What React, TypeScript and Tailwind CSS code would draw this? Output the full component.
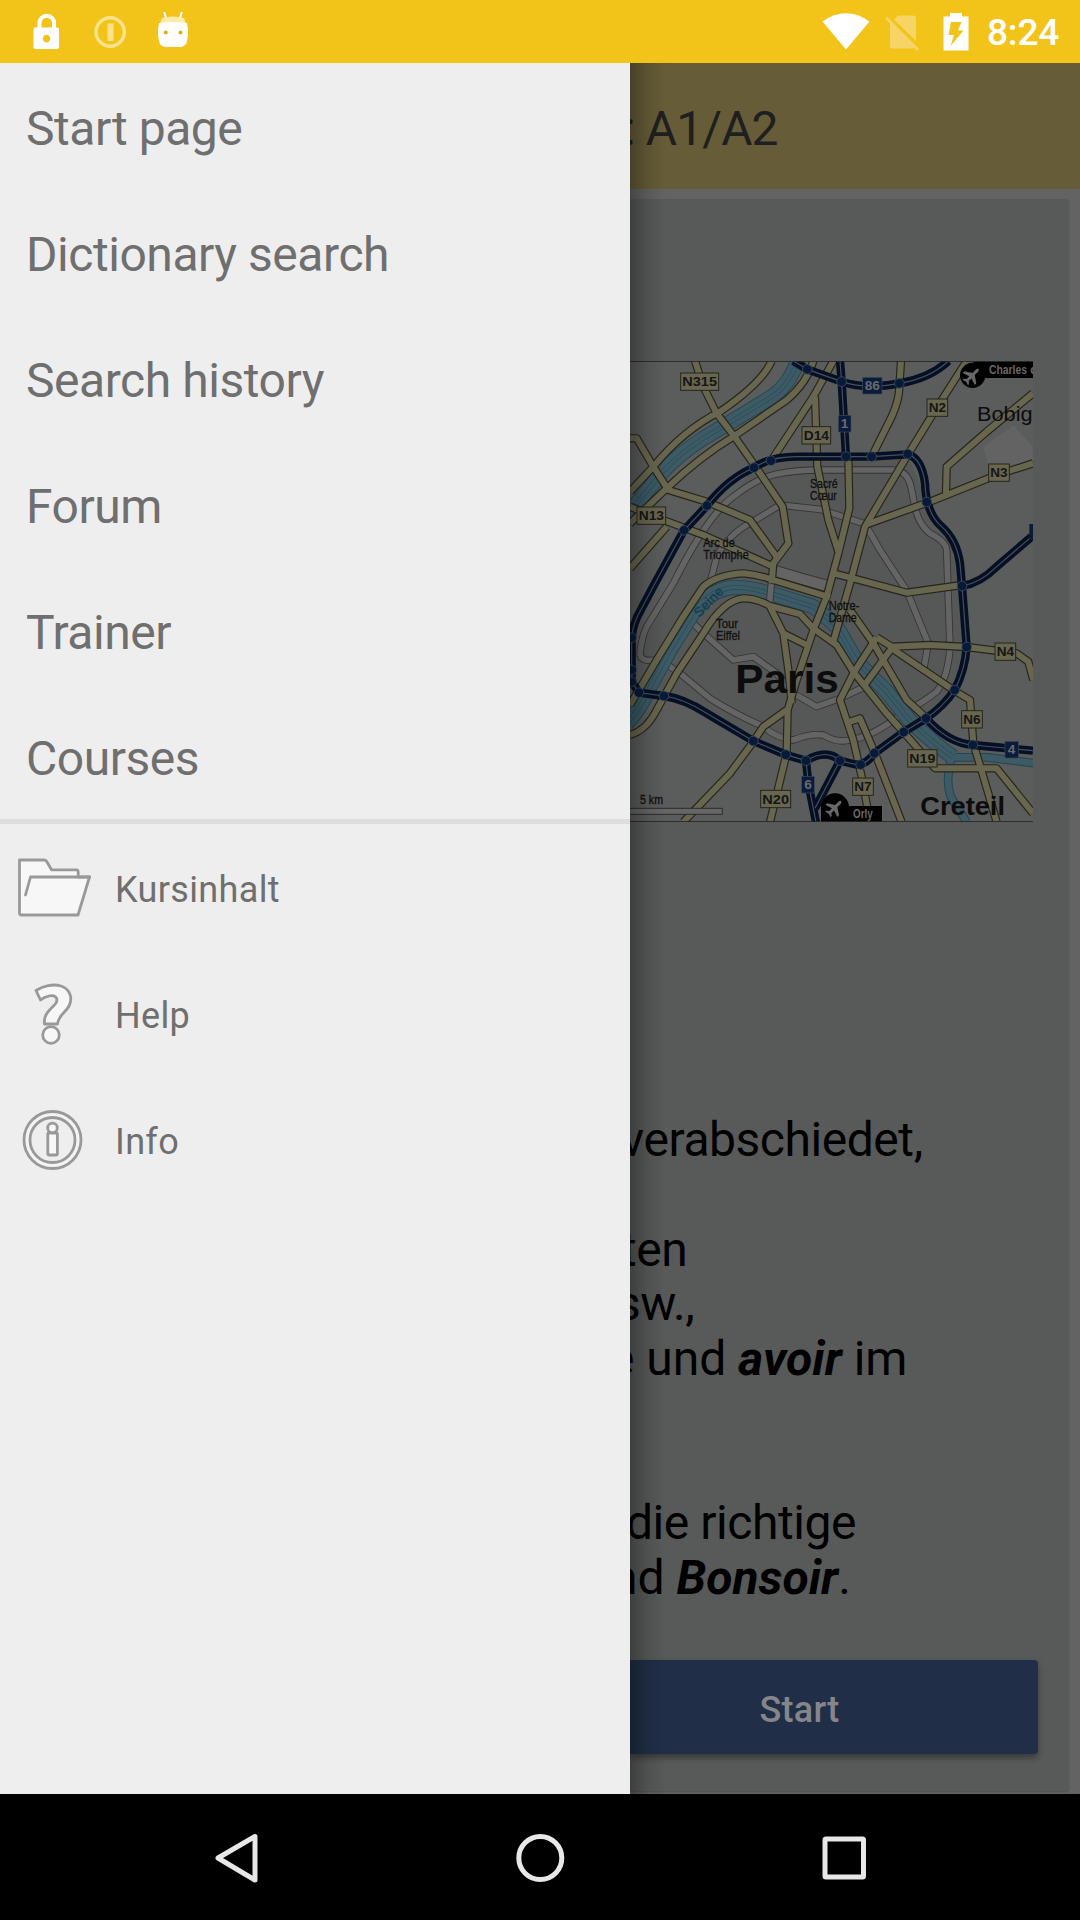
import React from "react";

const menuItems = ["Start page", "Dictionary search", "Search history", "Forum", "Trainer", "Courses"];

const whiteRoads = [
  "M160 700 C200 620 270 490 340 440 Q410 385 470 372 Q530 360 600 360 H820 Q858 362 870 400 C885 450 880 510 930 550 Q978 575 980 600 L984 720 L990 890 Q985 980 950 1025 Q905 1060 850 1088 Q760 1160 690 1170 Q650 1180 610 1155 Q570 1150 520 1170 Q470 1165 430 1130 Q340 1090 270 1045 L180 970 L118 928 Q60 940 60 910 Q65 860 80 830 L160 700",
  "M270 700 L290 620 Q330 550 390 520 L480 465 L600 478 L735 522 L780 600 L860 722 L925 880 L912 952",
  "M200 800 L245 845 L340 930 L400 920 L470 970 L520 1030 L590 1070 L660 1045 L735 1010",
];

const wideWhiteRoads = ["M455 660 L540 685 L630 710"];

const bridges = ["M455 690 L448 765"];

const yellowRoads = [
  "M225 33 L250 110 L290 190 L340 255 L410 355 L488 470 L505 580 L460 640 L455 700",
  "M455 33 Q425 100 300 185 Q190 240 100 350 L30 425",
  "M580 33 Q560 100 500 150 L340 260 Q240 320 140 415 L30 520",
  "M30 265 H50 L100 350 L145 420 L260 455 L390 510 L470 620",
  "M30 470 L130 510 L250 555 L460 650",
  "M140 530 L30 655",
  "M640 33 L580 140 L455 330",
  "M585 140 L592 350 L625 510 L655 605",
  "M685 320 L688 475 L655 610 L620 740 L580 840 L530 990 L503 1080 L500 1210 L450 1416",
  "M1040 33 L940 190 L860 320 L735 530 L690 700 L640 875",
  "M843 33 L838 110 Q838 160 800 230 L755 320",
  "M1239 340 L1130 375 L930 455 L735 525",
  "M1239 130 L1100 245 L980 350 L978 430",
  "M640 670 L700 685 L860 728 L1026 705",
  "M30 1065 L110 930 L190 800 L250 710 Q290 675 370 670 Q420 675 460 690 L630 742",
  "M30 1155 Q80 1140 110 1080 L170 970 L250 850 Q310 750 370 745 Q410 745 450 768 L540 792 L580 835 L650 885 L700 965 L800 1090 L880 1180 L945 1255 H1130 L1239 1390",
  "M690 780 L760 880 L860 1050 L920 1105",
  "M770 862 L815 890 L930 885 L1040 891 L1190 910 L1225 935 L1240 990",
  "M815 895 L1000 1020 L1050 1050 L1060 1180 L1090 1280 L1130 1416",
  "M815 895 L730 1010",
  "M770 862 L700 970 L660 1050 L700 1170 L725 1280 L750 1416",
  "M690 1115 L720 1105 L765 1210 L845 1416",
  "M450 770 L490 850 L505 960 L515 1060",
  "M490 850 L570 890",
  "M500 1080 L430 1130 L400 1175 L330 1270 L190 1416",
];

const rivers = [
  "M535 25 Q510 110 440 150 L350 205 L250 265 Q150 330 100 400 L50 460 L20 520",
  "M20 1120 Q60 1080 90 1010 L150 900 L225 780 Q270 720 340 712 Q400 712 500 745 L580 770 Q620 800 650 830 Q680 880 710 935 L800 1025 L870 1112 Q940 1180 1000 1222",
];

const streams = [
  "M1000 1222 H1100 L1245 1240",
  "M995 1222 Q975 1290 992 1340 L1040 1416",
];

const highways = [
  "M105 700 L192 541 L261 467 Q325 385 402 353 Q450 320 530 320 H755 L863 313 Q905 325 915 400 Q918 490 965 530 Q1010 570 1020 640 L1026 708 L1040 891 Q1035 960 1004 1020 Q970 1070 918 1105 L851 1146 L763 1210 Q735 1250 700 1242 L660 1232 Q620 1195 558 1232 L497 1214 L400 1173 L260 1090 Q190 1045 132 1038 L57 1028 L35 995 V863 Q38 820 65 775 Z",
  "M520 33 L562 58 L665 95 Q740 120 838 100 Q930 85 985 33",
  "M660 33 L665 95 L678 320",
  "M918 1105 Q985 1180 1059 1185 L1239 1202",
  "M1026 708 Q1080 700 1130 650 L1235 560",
  "M558 1232 L565 1300 L588 1416",
  "M660 1232 L585 1375",
];

const nodes = [
  [562, 58], [665, 95], [678, 320], [453, 332], [402, 353], [261, 467], [192, 541], [35, 863], [35, 960], [35, 995],
  [57, 1028], [132, 1038], [400, 1173], [497, 1214], [558, 1232], [660, 1232], [722, 1244], [763, 1210], [851, 1146],
  [918, 1105], [1004, 1020], [1040, 891], [1026, 708], [920, 456], [863, 312], [755, 320], [838, 100], [1059, 1185],
];

const roadSigns: [string, number, number, number][] = [
  ["N315", 239, 95, 114], ["D14", 589, 256, 86], ["N13", 94, 497, 86], ["N2", 952, 173, 62], ["N3", 1137, 368, 62],
  ["N4", 1156, 905, 62], ["N6", 1056, 1108, 62], ["N19", 907, 1225, 88], ["N7", 729, 1310, 62], ["N20", 467, 1347, 90],
];

const highwaySigns: [string, number, number, number][] = [
  ["86", 757, 107, 58], ["1", 674, 221, 38], ["6", 564, 1304, 38], ["4", 1175, 1199, 40],
];

function Strokes({ paths, color, width }: { paths: string[]; color: string; width: number }) {
  return (
    <g fill="none" stroke={color} strokeWidth={width} strokeLinejoin="round">
      {paths.map((d) => <path key={d} d={d} />)}
    </g>
  );
}

function Plane({ x, y }: { x: number; y: number }) {
  return (
    <g transform={`translate(${x} ${y}) rotate(45) scale(2.3)`}>
      <path
        d="M0 -12 C1.5 -12 2 -10 2 -8 V-3 L11 3 V6 L2 3 V8 L5 10.500 V12.500 L0 11 L-5 12.500 V10.500 L-2 8 V3 L-11 6 V3 L-2 -3 V-8 C-2 -10 -1.500 -12 0 -12Z"
        fill="#686868"
      />
    </g>
  );
}

function ParisMap() {
  return (
    <svg className="block h-[461px] w-[403px]" viewBox="30 33 1209 1383" fontFamily="Liberation Sans, Arial, sans-serif">
      <rect x="30" y="33" width="1209" height="1383" fill="#5b5c5c" />
      <path d="M60 910 L90 790 L240 570 L402 353 L530 320 H863 L915 440 L1020 640 L1040 891 L1004 1020 L851 1146 L660 1232 L500 1214 L132 1038Z" fill="#565757" />
      <path d="M1090 290 L1180 225 L1239 290 V335 L1112 370Z" fill="#636363" />
      <Strokes paths={whiteRoads} color="#333333" width={22} />
      <Strokes paths={wideWhiteRoads} color="#333333" width={36} />
      <Strokes paths={whiteRoads} color="#646464" width={17} />
      <Strokes paths={wideWhiteRoads} color="#646464" width={31} />
      <Strokes paths={streams} color="#1f4654" width={26} />
      <Strokes paths={rivers} color="#1f4654" width={46} />
      <Strokes paths={streams} color="#3e5a64" width={20} />
      <Strokes paths={rivers} color="#3e5a64" width={41} />
      <Strokes paths={rivers} color="#28505f" width={14} />
      <Strokes paths={rivers} color="#3e5a64" width={9} />
      <Strokes paths={bridges} color="#333333" width={22} />
      <Strokes paths={bridges} color="#646464" width={17} />
      <Strokes paths={yellowRoads} color="#27251b" width={25} />
      <Strokes paths={yellowRoads} color="#68664f" width={18} />
      <Strokes paths={highways} color="#061025" width={25} />
      <Strokes paths={highways} color="#46505f" width={3.5} />
      <path d="M1228 522 H1239 V570 H1228Z" fill="#0b1c3a" />
      {nodes.map(([x, y]) => (
        <circle key={`${x}-${y}`} cx={x} cy={y} r="14.500" fill="#081a38" stroke="#3c4e62" strokeWidth="2.500" />
      ))}
      {roadSigns.map(([t, x, y, w]) => (
        <g key={t}>
          <rect x={x - w / 2} y={y - 26} width={w} height="52" fill="#68664f" stroke="#27251b" strokeWidth="3" />
          <text x={x - w / 2 + 5} y={y + 14} fontSize="40" fontWeight="700" textLength={w - 10} lengthAdjust="spacingAndGlyphs" fill="#151515">{t}</text>
        </g>
      ))}
      {highwaySigns.map(([t, x, y, w]) => (
        <g key={t}>
          <rect x={x - w / 2} y={y - 25} width={w} height="50" fill="#0b1c3a" stroke="#39485b" strokeWidth="2" />
          <text x={x} y={y + 14} fontSize="41" fontWeight="700" textAnchor="middle" fill="#686b70">{t}</text>
        </g>
      ))}
      <g fill="#111111" stroke="#111111" strokeWidth="1" fontSize="36">
        <text x="570" y="414" textLength="83" lengthAdjust="spacingAndGlyphs">Sacré</text>
        <text x="570" y="449" textLength="80" lengthAdjust="spacingAndGlyphs">Cœur</text>
        <text x="250" y="591" textLength="94" lengthAdjust="spacingAndGlyphs">Arc de</text>
        <text x="250" y="627" textLength="136" lengthAdjust="spacingAndGlyphs">Triomphe</text>
        <text x="288" y="834" textLength="66" lengthAdjust="spacingAndGlyphs">Tour</text>
        <text x="288" y="870" textLength="72" lengthAdjust="spacingAndGlyphs">Eiffel</text>
        <text x="626" y="780" textLength="92" lengthAdjust="spacingAndGlyphs">Notre-</text>
        <text x="626" y="815" textLength="84" lengthAdjust="spacingAndGlyphs">Dame</text>
        <text x="60" y="1362" textLength="69" lengthAdjust="spacingAndGlyphs">5 km</text>
      </g>
      <text transform="translate(238 804) rotate(-46)" fontSize="40" fill="#123c50" textLength="108" stroke="#123c50" strokeWidth=".7">Seine</text>
      <text x="346" y="1030" fontSize="124" fontWeight="700" fill="#0c0c0c" textLength="310" lengthAdjust="spacingAndGlyphs">Paris</text>
      <text x="901" y="1395" fontSize="76" fontWeight="700" fill="#0c0c0c" textLength="254" lengthAdjust="spacingAndGlyphs">Creteil</text>
      <text x="1071" y="214" fontSize="61" fill="#0c0c0c" textLength="167" lengthAdjust="spacingAndGlyphs">Bobig</text>
      <path d="M30 1375 H307 V1393 H30" fill="#666666" stroke="#222222" strokeWidth="2.500" />
      <g fill="#000000">
        <circle cx="1058" cy="76" r="38" />
        <rect x="1060" y="35" width="179" height="49" />
        <circle cx="645" cy="1372" r="42" />
        <path d="M603 1372 H687 V1416 H603Z" />
        <rect x="680" y="1368" width="106" height="48" />
      </g>
      <Plane x={1056} y={77} />
      <Plane x={644} y={1373} />
      <g fill="#686868" fontWeight="700" fontSize="37">
        <text x="1107" y="71" textLength="114" lengthAdjust="spacingAndGlyphs">Charles</text>
        <text x="1231" y="71">d</text>
        <text x="699" y="1405" textLength="59" lengthAdjust="spacingAndGlyphs">Orly</text>
      </g>
      <path d="M30 34 H1239 M30 1415 H1239" stroke="#252525" strokeWidth="3" />
    </svg>
  );
}

function StatusBar() {
  return (
    <header className="flex h-[63px] shrink-0 items-center bg-[#f2c419] text-white">
      <svg className="ml-[32px] h-[40px] w-[30px]" viewBox="0 0 30 40" fill="none">
        <path d="M7.500 17 V11 a7.300 7.300 0 0 1 14.600 0 V17" stroke="white" strokeWidth="4" />
        <path fillRule="evenodd" fill="white" d="M3 15.500 H25.500 Q27 15.500 27 17 V35 Q27 37 25 37 H3.500 Q1.500 37 1.500 35 V17 Q1.500 15.500 3 15.500Z M14.500 22.800 a3.800 3.800 0 1 0 .1 0Z" />
      </svg>
      <svg className="ml-[30px] h-[40px] w-[36px]" viewBox="0 0 36 40" fill="none" stroke="#fbe28b">
        <circle cx="18.200" cy="20" r="14.200" strokeWidth="3.500" />
        <path d="M18.500 11.500 V29" strokeWidth="6" />
      </svg>
      <svg className="ml-[29px] h-[40px] w-[32px]" viewBox="0 0 32 40">
        <path d="M7 -1 L9.500 8 M25 -1 L22.500 8" stroke="white" strokeWidth="2" />
        <path d="M5 6 Q16 3 27 6 L29 12 H3Z" fill="#fceaa8" />
        <path d="M2 11 Q16 9 30 11 Q32 20 30 29 Q29 35 22 35 H10 Q3 35 2 29 Q0 20 2 11Z" fill="white" />
        <circle cx="8.700" cy="20.500" r="2" fill="#dfad10" />
        <circle cx="23.500" cy="20.500" r="2" fill="#dfad10" />
      </svg>
      <svg className="ml-auto h-[40px] w-[48px]" viewBox="0 0 48 40">
        <path d="M0.500 9.500 Q24 -7 47.500 9.500 L24 37.500Z" fill="white" />
      </svg>
      <svg className="ml-[14px] h-[40px] w-[36px]" viewBox="0 0 36 40">
        <path d="M6 9 L31 34 Q30 36.500 28 36.500 H9 Q6 36.500 6 33.500Z M14 3.500 H29 Q32 3.500 32 6.500 V29 L10 7.500Z" fill="#f6d566" />
        <path d="M2 5.500 L34 38" stroke="#f6d566" strokeWidth="2.600" />
      </svg>
      <svg className="ml-[23px] h-[40px] w-[26px]" viewBox="0 0 26 40">
        <path fillRule="evenodd" fill="white" d="M7 1 H19 V4.500 H25.500 V38.500 H0.500 V4.500 H7Z M8 10 L5.500 23 H11 L7.500 34 L20.500 18.500 H15 L18.500 10Z" />
      </svg>
      <span className="ml-[18px] mr-[21px] mt-[3px] w-[72px] text-[37px] font-medium leading-[64px] tracking-[-0.2px]">8:24</span>
    </header>
  );
}

const iconStroke = { stroke: "#999999", strokeWidth: 2.8, strokeLinejoin: "round" as const, strokeLinecap: "round" as const };

function FolderIcon() {
  return (
    <svg className="ml-[14px] h-[64px] w-[78px]" viewBox="0 0 78 64" fill="#f7f7f7" {...iconStroke}>
      <path d="M5.500 4 H30.500 Q32 4 33 6 L37.500 13.800 H62.500 Q64.200 14 64.200 16 V21 H75.500 L64 59 H7.500 Q5.500 59 5.500 57Z" />
      <path d="M11.500 39 L16.500 21 H75.500" fill="none" />
    </svg>
  );
}

function HelpIcon() {
  return (
    <svg className="ml-[32px] h-[66px] w-[42px]" viewBox="0 0 42 66" fill="#f7f7f7" {...iconStroke}>
      <path d="M4 9.500 C11 5 21 2.500 29 5 C38 8 41 17 37 25 C34 31 26 35 25.500 43 H12.500 C11 32 20 28 24 22 C27 16 22 14 17 15 Q12 16 8.500 19Z" />
      <circle cx="19" cy="54" r="8.300" />
    </svg>
  );
}

function InfoIcon() {
  return (
    <svg className="ml-[22px] h-[62px] w-[62px]" viewBox="0 0 62 62" fill="none" {...iconStroke}>
      <circle cx="30.500" cy="31" r="28.500" fill="#f4f4f4" />
      <circle cx="30.500" cy="31" r="22.500" fill="#eeeeee" />
      <circle cx="30.500" cy="19" r="4.800" fill="#f7f7f7" />
      <rect x="25.800" y="24" width="9.600" height="22" rx="1" fill="#f7f7f7" />
    </svg>
  );
}

const tools = [
  { label: "Kursinhalt", icon: <FolderIcon /> },
  { label: "Help", icon: <HelpIcon /> },
  { label: "Info", icon: <InfoIcon /> },
];

function Drawer() {
  return (
    <nav className="w-[630px] shrink-0 bg-[#eeeeee] text-[#6f6f6f]">
      <ul>
        {menuItems.map((item) => (
          <li key={item} className="flex h-[126px] items-center pl-[26px] pt-[5px] text-[48px] leading-none tracking-[-0.45px]">{item}</li>
        ))}
      </ul>
      <div className="h-[5px] bg-[#dddddd]" />
      <ul>
        {tools.map(({ label, icon }) => (
          <li key={label} className="flex h-[126px] items-center">
            <div className="mt-[2px] w-[115px] shrink-0">{icon}</div>
            <span className="mt-[5px] text-[36px] leading-none tracking-[0.35px]">{label}</span>
          </li>
        ))}
      </ul>
    </nav>
  );
}

function Lesson() {
  return (
    <main className="relative flex min-w-0 flex-1 flex-col overflow-hidden bg-[#636363]">
      <h1 className="flex h-[126px] shrink-0 items-center whitespace-pre bg-[#665c37] pt-[5px] text-[48px] leading-none tracking-[-0.9px] text-[#1f1f1f]">
        <span className="-ml-[6px]">: A1/A2</span>
      </h1>
      <section className="mr-[11px] mt-[10px] flex h-[1592px] flex-col rounded-r-[4px] bg-[#585a59] pt-[162px] shadow-[0_1px_2px_rgba(0,0,0,0.2)]">
        <ParisMap />
        <div className="mt-[291px] whitespace-pre text-[48px] leading-[54.750px] tracking-[-0.45px] text-black">
          <p className="-ml-[9px]">verabschiedet,</p>
          <p className="-ml-[9px] mt-[54.750px]">ten</p>
          <p className="-ml-[14px]">sw.,</p>
          <p className="-ml-[21px] tracking-normal">e und <b className="italic">avoir</b> im</p>
          <p className="-ml-[4px] mt-[109.500px]">die richtige</p>
          <p className="-ml-[19px] tracking-normal">nd <b className="italic">Bonsoir</b>.</p>
        </div>
        <button className="mb-[37px] mr-[31px] mt-auto h-[94px] rounded-r-[4px] bg-[#212e47] pr-[69px] pt-[5px] text-[36px] font-medium tracking-[0.2px] text-[#85858a] shadow-[0_4px_6px_rgba(0,0,0,0.35)]">
          Start
        </button>
      </section>
      <div className="pointer-events-none absolute inset-y-0 left-0 w-[36px] bg-linear-to-r from-black/30 via-black/10 to-transparent" />
    </main>
  );
}

function NavigationBar() {
  return (
    <footer className="flex h-[126px] shrink-0 items-center justify-center gap-[240px] bg-black">
      <svg className="size-[64px]" viewBox="0 0 64 64" fill="none" stroke="#e8e8e8" strokeWidth="5" strokeLinejoin="round">
        <path d="M51 11.500 V55 L14 33Z" />
      </svg>
      <svg className="size-[64px]" viewBox="0 0 64 64" fill="none" stroke="#e8e8e8" strokeWidth="5">
        <circle cx="32.300" cy="33" r="21.500" />
      </svg>
      <svg className="size-[64px]" viewBox="0 0 64 64" fill="none" stroke="#e8e8e8" strokeWidth="5" strokeLinejoin="round">
        <rect x="13" y="14" width="38.500" height="38" rx="1" />
      </svg>
    </footer>
  );
}

export default function App() {
  return (
    <div className="flex h-[1920px] w-[1080px] flex-col overflow-hidden font-[Roboto,sans-serif]">
      <StatusBar />
      <div className="flex h-[1731px] shrink-0">
        <Drawer />
        <Lesson />
      </div>
      <NavigationBar />
    </div>
  );
}
